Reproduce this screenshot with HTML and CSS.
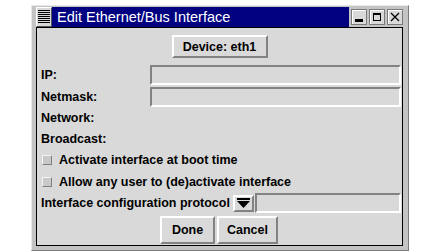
FILE: index.html
```html
<!DOCTYPE html>
<html lang="en">
<head>
    <meta charset="UTF-8">
    <title>Edit Ethernet/Bus Interface</title>
    <link rel="stylesheet" href="styles.css">
</head>
<body>
    <div class="window">
        <div class="titlebar">
            <div class="menu-btn"><span class="stripes"></span></div>
            <div class="title">Edit Ethernet/Bus Interface</div>
            <div class="win-btns">
                <div class="win-btn">
                    <svg width="10" height="10" viewBox="0 0 10 10"><rect x="1" y="7" width="8" height="3" fill="#000"/></svg>
                </div>
                <div class="win-btn">
                    <svg width="10" height="10" viewBox="0 0 10 10"><rect x="1.5" y="1.5" width="7" height="7" fill="none" stroke="#000"/><rect x="1" y="1" width="8" height="2" fill="#000"/></svg>
                </div>
                <div class="win-btn">
                    <svg width="10" height="10" viewBox="0 0 10 10"><path d="M1 1 L9 9 M9 1 L1 9" stroke="#000" stroke-width="1.2"/></svg>
                </div>
            </div>
        </div>
        <div class="content">
            <div class="row-device">
                <button class="btn device-btn">Device: eth1</button>
            </div>
            <div class="form-row entry-row">
                <label>IP:</label>
                <div class="entry"></div>
            </div>
            <div class="form-row entry-row">
                <label>Netmask:</label>
                <div class="entry"></div>
            </div>
            <div class="form-row text-row">
                <label>Network:</label>
            </div>
            <div class="form-row text-row">
                <label>Broadcast:</label>
            </div>
            <div class="check-row">
                <span class="check"></span>
                <span>Activate interface at boot time</span>
            </div>
            <div class="check-row">
                <span class="check"></span>
                <span>Allow any user to (de)activate interface</span>
            </div>
            <div class="proto-row">
                <span>Interface configuration protocol</span>
                <span class="option-btn">
                    <svg width="13" height="10" viewBox="0 0 13 10"><rect x="0" y="0" width="13" height="2" fill="#000"/><polygon points="0,3 13,3 6.5,10" fill="#000"/></svg>
                </span>
                <div class="entry proto-entry"></div>
            </div>
            <div class="button-row">
                <button class="btn done-btn">Done</button>
                <button class="btn cancel-btn">Cancel</button>
            </div>
        </div>
    </div>
</body>
</html>
```

FILE: styles.css
```css
body {
    margin: 0;
    background-color: #fff;
    font-family: "Liberation Sans", Arial, sans-serif;
}

.window {
    box-sizing: border-box;
    width: 378px;
    height: 246px;
    margin: 5px 0 0 31px;
    padding: 1px 5px 4px 4px;
    background-color: #c4c4c4;
    border: 1px solid;
    border-color: #e8e8e8 #7a7a7a #7a7a7a #e8e8e8;
    display: flex;
    flex-direction: column;
}

/* barra de título */
.titlebar {
    display: flex;
    align-items: stretch;
    height: 20px;
}

.menu-btn {
    width: 16px;
    box-sizing: border-box;
    background-color: #d9d9d9;
    border: 1px solid;
    border-color: #fff #555 #555 #fff;
    display: flex;
    align-items: center;
    justify-content: center;
}

.stripes {
    width: 12px;
    height: 14px;
    background: repeating-linear-gradient(to bottom, #000 0, #000 1px, transparent 1px, transparent 2px);
}

.title {
    flex: 1;
    background-color: #000080;
    color: #fff;
    font-size: 14.5px;
    line-height: 20px;
    padding-left: 5px;
    white-space: nowrap;
    margin-right: 2px;
}

.win-btns {
    display: flex;
    gap: 2px;
    align-items: center;
}

.win-btn {
    width: 16px;
    height: 16px;
    box-sizing: border-box;
    background-color: #d9d9d9;
    border: 1px solid #7a7a7a;
    box-shadow: inset 1px 1px 0 #fff;
    display: flex;
    align-items: center;
    justify-content: center;
}

/* área principal */
.content {
    flex: 1;
    background-color: #d9d9d9;
    border: 1px solid #000;
    padding: 0 1px;
    font-size: 12.5px;
    font-weight: bold;
    color: #000;
}

.btn {
    font-family: inherit;
    font-size: 12.5px;
    font-weight: bold;
    color: #000;
    background-color: #d9d9d9;
    border: 2px solid;
    border-color: #fff #828282 #828282 #fff;
    padding: 0;
    margin: 0;
}

.row-device {
    display: flex;
    justify-content: center;
    margin: 7px 0;
}

.device-btn {
    width: 96px;
    height: 23px;
}

.form-row {
    display: flex;
    align-items: center;
    padding-left: 3px;
}

.form-row label {
    width: 109px;
}

.entry-row {
    height: 20px;
}

.entry-row + .entry-row {
    margin-top: 2px;
}

.entry {
    flex: 1;
    align-self: stretch;
    border: 2px solid;
    border-color: #828282 #fff #fff #828282;
}

.text-row {
    height: 21px;
}

.check-row {
    display: flex;
    align-items: center;
    height: 22px;
    gap: 7px;
    padding-left: 4px;
}

.check {
    width: 10px;
    height: 10px;
    box-sizing: border-box;
    background-color: #c8c8c8;
    border: 1px solid;
    border-color: #f4f4f4 #808080 #808080 #f4f4f4;
}

.proto-row {
    display: flex;
    align-items: center;
    height: 20px;
    padding-left: 3px;
}

.option-btn {
    width: 21px;
    height: 17px;
    box-sizing: border-box;
    margin-left: 3px;
    border: 2px solid;
    border-color: #fff #828282 #828282 #fff;
    display: flex;
    justify-content: center;
    align-items: center;
}

.proto-entry {
    margin-left: 1px;
}

.button-row {
    display: flex;
    justify-content: center;
    gap: 2px;
    margin-top: 3px;
    padding-right: 1px;
}

.button-row .btn {
    height: 28px;
}

.done-btn {
    width: 55px;
}

.cancel-btn {
    width: 61px;
}
```
